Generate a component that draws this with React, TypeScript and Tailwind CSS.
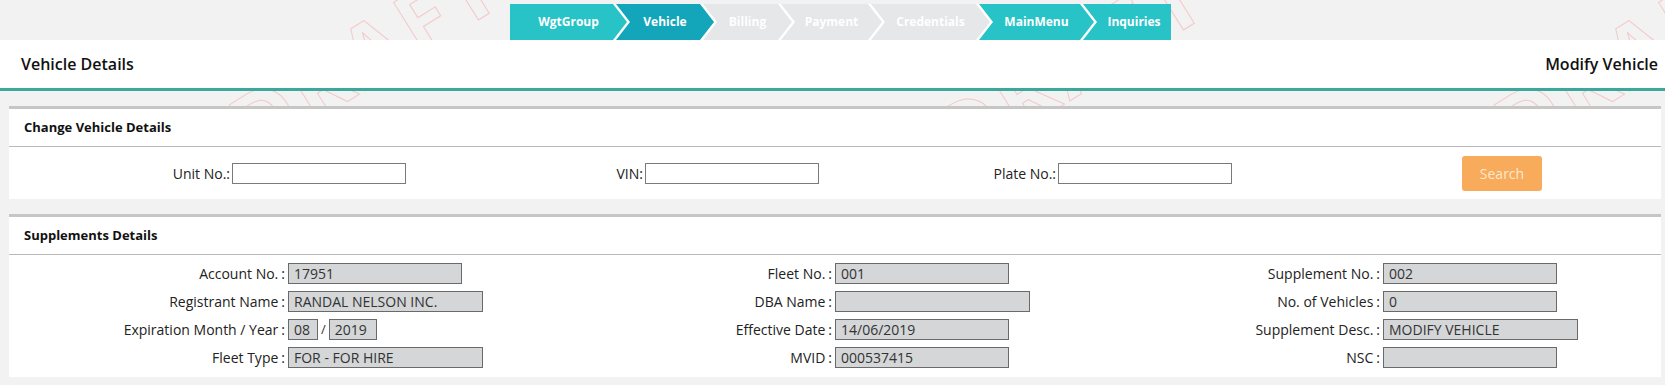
import React from 'react';

type Step = { label: string; box: string; tone: string };

// breadcrumb steps, widths measured so the chevrons land where the original ones do
const steps: Step[] = [
  { label: 'WgtGroup', box: 'w-[117px] [clip-path:polygon(0_0,calc(100%_-_14px)_0,100%_50%,calc(100%_-_14px)_100%,0_100%)]', tone: 'bg-[#27c3c7] text-white' },
  { label: 'Vehicle', box: 'w-[98px] -ml-[11px] [clip-path:polygon(0_0,calc(100%_-_14px)_0,100%_50%,calc(100%_-_14px)_100%,0_100%,14px_50%)]', tone: 'bg-[#13a6ba] text-white' },
  { label: 'Billing', box: 'w-[89px] -ml-[11px] [clip-path:polygon(0_0,calc(100%_-_14px)_0,100%_50%,calc(100%_-_14px)_100%,0_100%,14px_50%)]', tone: 'bg-[#e5e7e9] text-white' },
  { label: 'Payment', box: 'w-[101px] -ml-[11px] [clip-path:polygon(0_0,calc(100%_-_14px)_0,100%_50%,calc(100%_-_14px)_100%,0_100%,14px_50%)]', tone: 'bg-[#e5e7e9] text-white' },
  { label: 'Credentials', box: 'w-[119px] -ml-[11px] [clip-path:polygon(0_0,calc(100%_-_14px)_0,100%_50%,calc(100%_-_14px)_100%,0_100%,14px_50%)]', tone: 'bg-[#e5e7e9] text-white' },
  { label: 'MainMenu', box: 'w-[115px] -ml-[11px] [clip-path:polygon(0_0,calc(100%_-_14px)_0,100%_50%,calc(100%_-_14px)_100%,0_100%,14px_50%)]', tone: 'bg-[#27c3c7] text-white' },
  { label: 'Inquiries', box: 'w-[88px] -ml-[11px] pl-[14px] [clip-path:polygon(0_0,100%_0,100%_100%,0_100%,14px_50%)]', tone: 'bg-[#27c3c7] text-white' },
];

type Field = { label: string; value?: string; wide?: boolean; date?: [string, string] };

const columns: Field[][] = [
  [
    { label: 'Account No.', value: '17951' },
    { label: 'Registrant Name', value: 'RANDAL NELSON INC.', wide: true },
    { label: 'Expiration Month / Year', date: ['08', '2019'] },
    { label: 'Fleet Type', value: 'FOR - FOR HIRE', wide: true },
  ],
  [
    { label: 'Fleet No.', value: '001' },
    { label: 'DBA Name', value: '', wide: true },
    { label: 'Effective Date', value: '14/06/2019' },
    { label: 'MVID', value: '000537415' },
  ],
  [
    { label: 'Supplement No.', value: '002' },
    { label: 'No. of Vehicles', value: '0' },
    { label: 'Supplement Desc.', value: 'MODIFY VEHICLE', wide: true },
    { label: 'NSC', value: '' },
  ],
];

const ReadBox: React.FC<{ value: string; className: string }> = ({ value, className }) => (
  <div className={`h-[21px] border border-[#6a6a6a] bg-[#d4d6d8] pl-[5px] text-[14px] leading-[19px] text-[#333] whitespace-nowrap overflow-hidden ${className}`}>
    {value}
  </div>
);

const FilterField: React.FC<{ label: string }> = ({ label }) => (
  <div className="flex items-center justify-end pr-[16px]">
    <span className="text-[14px] text-[#222]">{label}</span>
    <div className="ml-[2px] h-[21px] w-[174px] border border-[#7a7a7a] bg-white"></div>
  </div>
);

const CardHeader: React.FC<{ title: string }> = ({ title }) => (
  <div className="flex h-[38px] items-center border-b border-[#b9b9b9] pl-[15px] text-[13px] font-bold text-[#111]">
    {title}
  </div>
);

export default function App() {
  return (
    <div className="relative h-[385px] w-full overflow-hidden bg-[#f2f2f3] font-['Open_Sans',sans-serif]">
      {/* WATERMARK - fond, derrière les panneaux */}
      <div className="pointer-events-none absolute inset-0 z-0 select-none">
        <span className="absolute left-[215px] top-[-10px] rotate-[-32deg] text-[84px] font-bold tracking-[6px] text-transparent [-webkit-text-stroke:1px_#f4c9c9]">DRAFT</span>
        <span className="absolute left-[920px] top-[0px] rotate-[-32deg] text-[84px] font-bold tracking-[6px] text-transparent [-webkit-text-stroke:1px_#f4c9c9]">DRAFT</span>
        <span className="absolute left-[1480px] top-[-10px] rotate-[-32deg] text-[84px] font-bold tracking-[6px] text-transparent [-webkit-text-stroke:1px_#f4c9c9]">DRAFT</span>
      </div>

      <div className="relative z-10">
        {/* BREADCRUMB */}
        <div className="flex h-[40px] items-start pl-[510px] pt-[4px]">
          <div className="flex h-[36px] bg-white">
            {steps.map((s) => (
              <div
                key={s.label}
                className={`flex h-full items-center justify-center text-[12px] font-bold ${s.box} ${s.tone}`}
              >
                {s.label}
              </div>
            ))}
          </div>
        </div>

        {/* HEADER */}
        <div className="flex h-[51px] items-center justify-between border-b-[3px] border-[#3aa89b] bg-white pl-[21px] pr-[7px] text-[16px] font-semibold text-[#111]">
          <span>Vehicle Details</span>
          <span>Modify Vehicle</span>
        </div>

        <div className="flex flex-col gap-[15px] pl-[9px] pr-[4px] pt-[15px]">
          {/* CHANGE VEHICLE DETAILS */}
          <div className="border-t-[3px] border-[#c6c6c6] bg-white">
            <CardHeader title="Change Vehicle Details" />
            <div className="grid h-[52px] grid-cols-4 items-center">
              <FilterField label="Unit No.:" />
              <FilterField label="VIN:" />
              <FilterField label="Plate No.:" />
              <div className="flex items-center pl-[214px]">
                <button className="h-[35px] w-[80px] rounded-[3px] bg-[#f8ab5b] text-[14px] text-[#fde8cf]">
                  Search
                </button>
              </div>
            </div>
          </div>

          {/* SUPPLEMENTS DETAILS */}
          <div className="border-t-[3px] border-[#c6c6c6] bg-white">
            <CardHeader title="Supplements Details" />
            <div className="grid grid-cols-[547px_548px_1fr] pb-[9px] pt-[8px]">
              {columns.map((col, ci) => (
                <div key={ci} className="flex flex-col gap-[7px]">
                  {col.map((f) => (
                    <div key={f.label} className="flex h-[21px] items-center">
                      <div className="w-[276px] text-right text-[14px] text-[#222]">
                        {f.label}
                        <span className="ml-[3px]">:</span>
                      </div>
                      <div className="ml-[3px] flex items-center">
                        {f.date ? (
                          <>
                            <ReadBox value={f.date[0]} className="w-[30px]" />
                            <span className="mx-[3px] text-[13px] text-[#333]">/</span>
                            <ReadBox value={f.date[1]} className="w-[48px]" />
                          </>
                        ) : (
                          <ReadBox value={f.value ?? ''} className={f.wide ? 'w-[195px]' : 'w-[174px]'} />
                        )}
                      </div>
                    </div>
                  ))}
                </div>
              ))}
            </div>
          </div>
        </div>
      </div>
    </div>
  );
}
